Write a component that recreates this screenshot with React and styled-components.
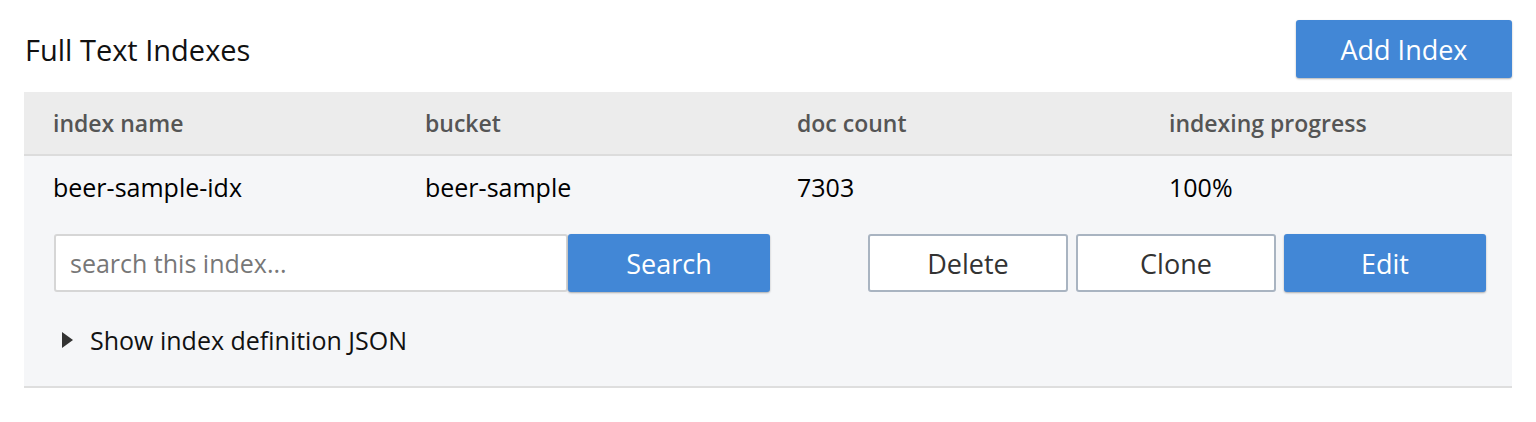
import React from "react";
import styled, { createGlobalStyle } from "styled-components";

const GlobalStyle = createGlobalStyle`
  html, body { margin: 0; padding: 0; background: #fff; }
  body { font-family: "Open Sans", "Liberation Sans", sans-serif; color: #000; }
  * { box-sizing: border-box; }
`;

const Page = styled.div`
  width: 1536px;
  height: 422px;
  padding: 20px 24px 0 24px;
`;

const TitleBar = styled.div`
  display: flex;
  justify-content: space-between;
  align-items: center;
  height: 58px;
  margin-bottom: 14px;
`;

const Title = styled.h2`
  margin: 0;
  padding-left: 1px;
  font-size: 29px;
  font-weight: 500;
  color: #111;
`;

const Button = styled.button`
  height: 58px;
  width: ${(p) => p.$width || 200}px;
  border-radius: 3px;
  font-family: inherit;
  font-size: 27px;
  cursor: pointer;
  ${(p) =>
    p.$primary
      ? `
    background: #4287d6;
    color: #fff;
    border: none;
    box-shadow: 0 1px 2px rgba(0,0,0,0.3);
  `
      : `
    background: #fff;
    color: #333;
    border: 2px solid #a9b4c1;
  `}
`;

const Table = styled.div`
  border-bottom: 2px solid #dedede;
`;

const Row = styled.div`
  display: grid;
  grid-template-columns: repeat(4, 1fr);
  align-items: center;
  height: ${(p) => p.$height}px;
  background: ${(p) => p.$bg};
  ${(p) => p.$head && "border-bottom: 2px solid #dcdcdc;"}
`;

const Cell = styled.div`
  padding-left: 29px;
  font-size: ${(p) => (p.$head ? 23 : 25)}px;
  font-weight: ${(p) => (p.$head ? 600 : 400)};
  color: ${(p) => (p.$head ? "#555" : "#000")};
`;

const Details = styled.div`
  background: #f5f6f8;
  padding: 16px 26px 0 30px;
  height: 168px;
`;

const Actions = styled.div`
  display: flex;
  align-items: center;
`;

const SearchInput = styled.input`
  width: 514px;
  height: 58px;
  border: 2px solid #d6d6d6;
  border-radius: 3px;
  padding: 0 14px;
  font-family: inherit;
  font-size: 25px;
  color: #333;
  background: #fff;
  outline: none;
  &::placeholder { color: #777; }
`;

const Spacer = styled.div`
  flex: 1;
`;

const ButtonGroup = styled.div`
  display: flex;
  gap: 8px;
`;

const Toggle = styled.div`
  display: flex;
  align-items: center;
  gap: 17px;
  margin-top: 31px;
  padding-left: 8px;
  font-size: 25px;
  color: #111;
`;

const Arrow = styled.span`
  width: 0;
  height: 0;
  border-top: 8px solid transparent;
  border-bottom: 8px solid transparent;
  border-left: 11px solid #333;
`;

const columns = ["index name", "bucket", "doc count", "indexing progress"];
const values = ["beer-sample-idx", "beer-sample", "7303", "100%"];

export default function App() {
  return (
    <Page>
      <GlobalStyle />
      <TitleBar>
        <Title>Full Text Indexes</Title>
        <Button $primary $width={216}>Add Index</Button>
      </TitleBar>
      <Table>
        <Row $head $height={64} $bg="#ececec">
          {columns.map((c) => (
            <Cell $head key={c}>{c}</Cell>
          ))}
        </Row>
        <Row $height={62} $bg="#f5f6f8">
          {values.map((v) => (
            <Cell key={v}>{v}</Cell>
          ))}
        </Row>
        <Details>
          <Actions>
            <SearchInput placeholder="search this index..." />
            <Button $primary $width={202}>Search</Button>
            <Spacer />
            <ButtonGroup>
              <Button>Delete</Button>
              <Button>Clone</Button>
              <Button $primary $width={202}>Edit</Button>
            </ButtonGroup>
          </Actions>
          <Toggle>
            <Arrow />
            Show index definition JSON
          </Toggle>
        </Details>
      </Table>
    </Page>
  );
}
